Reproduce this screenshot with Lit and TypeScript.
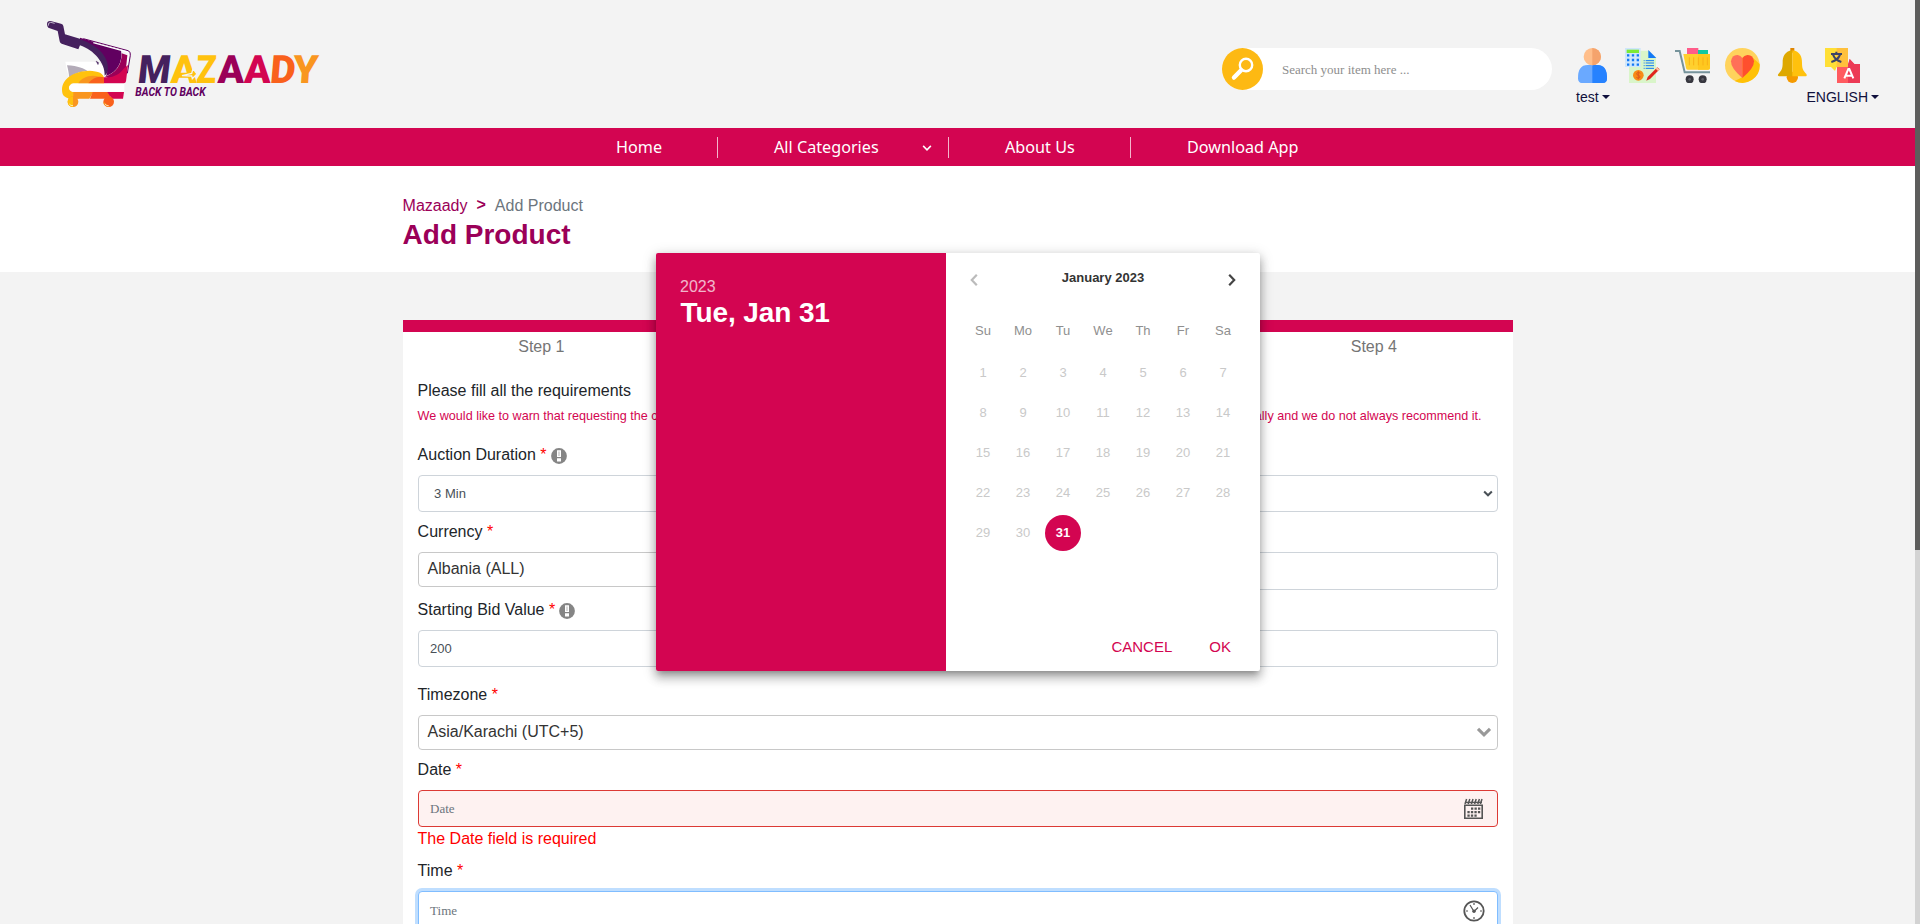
import { LitElement, html, css, svg } from "lit";
import { customElement } from "lit/decorators.js";

const letter = (ch: string, x: number, width: number, color: string, skew: number) =>
  svg`<text transform=${`translate(${x} 220) skewX(${-skew})`} fill=${color} textLength=${width} lengthAdjust="spacingAndGlyphs">${ch}</text>`;

const logo = svg`
<svg class="logo" width="310" height="110" viewBox="0 0 930 330">
  <path fill="#fff" d="M106 155H190C222 158 230 178 228 200L160 190L118 203L110 180Z"/>
  <path fill="#b3abb8" d="M111 166C145 168 162 176 174 184C150 184 132 192 118 203C116 190 115 180 111 166Z"/>
  <path fill="#45215e" d="M51 42Q51 32 62 33L93 41Q99 42 100 48L105 73L152 87C198 98 238 138 238 165C238 182 232 190 224 197C226 160 192 120 150 106L145 118L95 101Q90 100 89 94L83 63L55 53Q51 51 51 42Z"/>
  <path d="M55 47Q54 37 62 37L74 40" fill="none" stroke="#fff" stroke-width="2"/>
  <path fill="#610060" d="M150 83L273 120C279 155 262 187 228 198C248 155 215 110 150 88Z"/>
  <path fill="none" stroke="#610060" stroke-width="3" d="M160 86L294 122Q303 125 301 136L292 190"/>
  <path fill="none" stroke="#fff" stroke-width="4" d="M190 98L288 125Q297 128 295 137L289 180"/>
  <path fill="#9b0058" d="M275 130L292 136L285 203C262 208 240 206 224 201C256 190 276 166 275 130Z"/>
  <path fill="#d30551" d="M294 165L288 214Q287 220 281 220H222V202C250 205 272 190 280 177Z"/>
  <path d="M198 153L206 158L204 164Z" fill="#45215e" stroke="#45215e"/>
  <path fill="#ffc20e" d="M96 240C96 203 135 183 178 182C205 183 222 190 222 205V220H130C113 223 113 243 128 246L130 266C106 266 96 258 96 240Z"/>
  <path fill="#f9961f" d="M145 220C155 201 190 188 222 206V220Z"/>
  <path fill="#f9611c" d="M175 220C188 203 205 196 222 202V220Z"/>
  <path fill="#fff" d="M128 221H283V245H128C114 240 114 226 128 221Z"/>
  <path fill="#ffc20e" d="M108 246H146V266H115Z"/>
  <path fill="#f9961f" d="M130 246H190L178 266H130Z"/>
  <path fill="#f9611c" d="M188 246H240L240 266H180Z"/>
  <path fill="#d30551" d="M232 246H282L279 266H245Z"/>
  <circle cx="129" cy="275" r="16" fill="#f9961f"/><path fill="#ffc20e" d="M129 259A16 16 0 0 0 129 291Z"/>
  <circle cx="236" cy="275" r="16" fill="#f9611c"/><path fill="#f9961f" d="M220 275A16 16 0 0 0 240 290Z"/>
  <path d="M118 282Q122 288 129 287M225 282Q229 288 236 287" stroke="#fff" stroke-width="2" fill="none"/>
  <g font-family="Roboto" font-weight="900" font-size="117">
    ${letter("M", 320, 97, "#45215e", 7)}
    ${letter("A", 421, 80, "#ffc20e", 2)}
    ${letter("Z", 497, 60, "#ffc20e", 3)}
    ${letter("A", 562, 80, "#9b0058", 2)}
    ${letter("A", 641, 80, "#d30551", 2)}
    ${letter("D", 718, 76, "#f9611c", 5)}
    ${letter("Y", 786, 76, "#f9961f", 4)}
  </g>
  <path d="M456 197L485 190L489 176L501 192L487 206L485 198Z" fill="#ffc20e" stroke="#f3f3f3" stroke-width="4"/>
  <text x="316" y="259" fill="#610060" font-family="Roboto" font-weight="700" font-style="italic" font-size="36" textLength="211" lengthAdjust="spacingAndGlyphs">BACK TO BACK</text>
</svg>`;

/* The header icons share a 105-unit grid, three units to a pixel. */
const icon = (body: unknown) => svg`<svg width="35" height="35" viewBox="0 0 105 105">${body}</svg>`;

const userIcon = icon(svg`
  <path fill="#6aa9ff" d="M9 92Q8 51 38 51H68Q97 52 96 92Q96 104 84 105H20Q10 104 9 92Z"/>
  <path fill="#2682ff" d="M52 51H68Q97 52 96 92Q96 104 84 105H52Z"/>
  <circle cx="52" cy="26" r="26" fill="#ffbe8a"/><path fill="#f5a36c" d="M52 0A26 26 0 0 1 52 52Z"/>`);

const docIcon = icon(svg`
  <path fill="#d9f5c9" d="M12 8H70L93 30V105H12Z"/><path fill="#1379f5" d="M70 6L94 30H70Z"/>
  <rect width="47" height="57" fill="#cfe6fb"/><rect x="5" y="5" width="37" height="10" fill="#7cea35"/>
  <path stroke="#1379f5" stroke-width="7" stroke-dasharray="7 7.5" d="M6 22H42M6 36H42M6 50H42"/>
  <path stroke="#1379f5" stroke-width="3" d="M56 38H59M62 38H87M56 45H59M62 45H87M56 53H59M62 53H87M56 61H59M62 61H87"/>
  <circle cx="40" cy="82" r="16" fill="#f78b16"/>
  <path d="M46 76Q40 69 35 76Q35 82 40 82Q47 84 45 88Q40 94 34 88M40 70V94" fill="none" stroke="#e05a1b" stroke-width="3"/>
  <path d="M64 98L68 87L97 58L104 64L75 93Z" fill="#e0251d"/><path d="M92 62L96 58L104 65L99 69Z" fill="#fbc6a0"/>`);

const cartIcon = icon(svg`
  <rect x="36" width="34" height="22" fill="#ff5c8a"/><rect x="69" y="6" width="30" height="17" fill="#12c8a0"/>
  <path fill="#ffd02e" d="M25 18H105V60Q105 65 99 65H38Q34 65 33 60Z"/>
  <path fill="#ffc81f" d="M69 18H105V60Q105 65 99 65H69Z"/>
  <path stroke="#f9b016" stroke-width="3" d="M43 28V52M56 28V52M70 28V52M84 28V52M97 28V52"/>
  <path fill="none" stroke="#76939b" stroke-width="6" d="M0 9H14L29 73H105"/>
  <circle cx="44" cy="94" r="12" fill="#37373f"/><circle cx="83" cy="94" r="12" fill="#37373f"/>
  <circle cx="44" cy="94" r="4" fill="#5c5c66"/><circle cx="83" cy="94" r="4" fill="#5c5c66"/>`);

const heartIcon = icon(svg`
  <circle cx="52" cy="52" r="52" fill="#ffd35c"/>
  <path fill="#ffc107" d="M85 31L104 48A52 52 0 0 1 29 99L52 88Z"/>
  <path fill="#ff7058" d="M52 90Q17 60 18 40Q21 20 38 21Q47 22 52 30Z"/>
  <path fill="#ff4f2e" d="M52 90Q88 60 87 40Q84 20 67 21Q57 22 52 30Z"/>`);

const bellIcon = icon(svg`
  <circle cx="52" cy="88" r="17" fill="#f59a00"/><path fill="#e08600" d="M46 0H58V14H46Z"/>
  <path fill="#dea800" d="M52 7C28 10 23 28 23 44C23 62 20 67 10 78Q6 85 14 85H52Z"/>
  <path fill="#ffc10d" d="M52 7C76 10 81 28 81 44C81 62 84 67 94 78Q98 85 90 85H52Z"/>`);

const langIcon = icon(svg`
  <path fill="#ffdf36" d="M0 0H69V57H35L30 69L18 57H0Z"/><path fill="#ffc03c" d="M35 0H69V57H35Z"/>
  <path fill="#ff5a5f" d="M36 57H69L74 33L88 48H105V105H36Z"/><path fill="#ec3a55" d="M69 48L74 33L88 48H105V105H69Z"/>
  <path d="M18 18H51M34 11V18M24 20Q30 36 49 42M45 20Q40 36 19 42" fill="none" stroke="#3c4468" stroke-width="6"/>
  <path d="M58 91L70 63H73L85 91M62 83H81" fill="none" stroke="#fff" stroke-width="6"/>`);

const infoIcon = svg`<svg class="info" width="16" height="16" viewBox="0 0 16 16"><circle cx="8" cy="8" r="7.9" fill="#858585"/><path fill="#fff" d="M6 2.3H10V9H6ZM6 10.3H10V13.5H6Z"/><path fill="#b5b5b5" d="M7.5 3.4H8.5V8H7.5Z"/></svg>`;

const calendarIcon = svg`<svg width="19" height="22" viewBox="0 0 19 22">
  <path d="M.8 7.2H18.2V20.2H.8Z" fill="none" stroke="#555" stroke-width="1.6"/>
  <path d="M1 6L2.6 1M4.2 6L5.8 1M7.4 6L9 1M10.6 6L12.2 1M13.8 6L15.4 1M16.4 6L18 1" stroke="#555" stroke-width="1.5"/>
  <path d="M1 4.4H18" stroke="#555" stroke-width="1.4"/>
  <path d="M7 10.6H17M3.4 14.1H17M3.4 17.6H13.4" stroke="#555" stroke-width="2.2" stroke-dasharray="2.3 1.2"/></svg>`;

const clockIcon = svg`<svg width="22" height="22" viewBox="0 0 22 22">
  <circle cx="11" cy="11" r="9.7" fill="none" stroke="#555" stroke-width="1.8"/>
  <path d="M11 3V5M11 17V19M3 11H5M17 11H19M7 5L11 11.5L15 7.5" fill="none" stroke="#555" stroke-width="1.2"/><circle cx="11" cy="11.3" r="1.7" fill="#555"/></svg>`;

const chevron = (w: number, h: number, color: string, sw: number) =>
  svg`<svg width=${w} height=${h} viewBox="0 0 14 9"><path d="M1.6 1.6L7 7L12.4 1.6" fill="none" stroke=${color} stroke-width=${sw}/></svg>`;

@customElement("date-dialog")
export class DateDialog extends LitElement {
  static styles = css`
    :host { display: flex; width: 604px; height: 418px; background: #fff; border-radius: 2px; font-size: 13px;
      box-shadow: 0 5px 5px -3px rgba(0,0,0,.2), 0 8px 10px 1px rgba(0,0,0,.14), 0 3px 14px 2px rgba(0,0,0,.12), 0 3px 10px rgba(0,0,0,.15); }
    .side { width: 290px; box-sizing: border-box; padding: 23px 24px; background: #d30551; color: #fff; border-radius: 2px 0 0 2px; }
    .year { font-size: 16px; line-height: 22px; opacity: .7; }
    .day { font-size: 28px; font-weight: 700; line-height: 29px; letter-spacing: -.1px; padding-left: .5px; }
    .main { width: 314px; display: flex; flex-direction: column; }
    .month { display: flex; justify-content: space-between; align-items: center; height: 50px; padding: 0 24px; font-weight: 700; color: #333; }
    .month b { padding-bottom: 1px; }
    .month svg { margin-top: 4px; }
    .grid { display: grid; grid-template-columns: repeat(7, 40px); grid-auto-rows: 40px; padding: 9px 17px 0; text-align: center; line-height: 38px; color: #c9c9c9; }
    .grid .wd { color: #8f8f8f; }
    .grid .num { padding-top: 2px; }
    .sel { width: 36px; height: 36px; line-height: 36px; margin: 3px 2px 0; border-radius: 50%; background: #d30551; color: #fff; font-weight: 700; }
    .actions { display: flex; justify-content: flex-end; gap: 37px; margin-top: auto; padding: 0 29px 14px 0; font-size: 15px; line-height: 20px; color: #d30551; }
  `;
  render() {
    return html`
      <div class="side"><div class="year">2023</div><div class="day">Tue, Jan 31</div></div>
      <div class="main">
        <div class="month">
          <svg width="8" height="12" viewBox="0 0 8 12"><path d="M6.8 .8L1.8 6L6.8 11.2" fill="none" stroke="#bbb" stroke-width="2.2"/></svg>
          <b>January 2023</b>
          <svg width="8" height="12" viewBox="0 0 8 12"><path d="M1.2 .8L6.2 6L1.2 11.2" fill="none" stroke="#444" stroke-width="2.2"/></svg>
        </div>
        <div class="grid">
          ${["Su", "Mo", "Tu", "We", "Th", "Fr", "Sa"].map((d) => html`<div class="wd">${d}</div>`)}
          ${Array.from({ length: 30 }, (_, i) => html`<div class="num">${i + 1}</div>`)}
          <div class="sel">31</div>
        </div>
        <div class="actions"><span>CANCEL</span><span>OK</span></div>
      </div>`;
  }
}

@customElement("app-root")
export class AppRoot extends LitElement {
  static styles = css`
    :host { display: flex; position: relative; width: 100%; height: 924px; overflow: hidden; background: #f3f3f3;
      font-family: "Liberation Sans", Arial, sans-serif; font-size: 16px; line-height: 24px; color: #212529; }
    * { box-sizing: border-box; }
    svg { display: block; flex: none; }
    .page { flex: 1; min-width: 0; }
    .scroll { width: 5px; background: #d3d3d3; }
    .thumb { height: 550px; background: #5d5d5c; }
    header { display: flex; height: 128px; padding: 10px 0 0 30px; }
    .search { display: flex; align-items: center; width: 330px; height: 42px; margin: 38px 23px 0 auto; background: #fff; border-radius: 21px;
      font: 13px "Liberation Serif", serif; color: #8e8e8e; gap: 19px; }
    .search span { padding-top: 2px; }
    .account { width: 340px; padding-top: 38px; }
    .icons { display: flex; gap: 15px; }
    .names { display: flex; justify-content: space-between; padding: 4px 36px 0 1px; font-size: 14px; line-height: 21px; color: #10103c; }
    .names span { display: flex; align-items: center; gap: 3px; }
    .caret { border: 4px solid transparent; border-top-color: #10103c; border-bottom: 0; margin-bottom: 2px; }
    nav { display: flex; justify-content: center; align-items: center; height: 38px; background: #d30551; color: #fff; font: 16.2px/21px "Noto Sans", sans-serif; }
    nav div { height: 21px; padding-left: 56px; border-right: 1px solid #f3b6cc; white-space: nowrap; }
    .n1 { width: 158px; } .n2 { width: 231px; display: flex; justify-content: space-between; padding-right: 16px; }
    .n2 svg { margin-top: 7px; }
    .n3 { width: 182px; } nav .n4 { width: 224px; border: 0; }
    .title { height: 106px; background: #fff; padding: 28px 0 0 402.6px; color: #9b0058; }
    .crumbs { display: flex; gap: 9px; }
    .crumbs b { line-height: 22px; } .crumbs i { font-style: normal; color: #6c757d; }
    h1 { margin: 0; font-size: 28px; line-height: 34px; }
    .card { width: 1110px; height: 604px; margin: 48px auto 0 402.6px; background: #fff; }
    .bar { height: 12px; background: #d30551; }
    .steps { display: grid; grid-template-columns: repeat(4, 1fr); text-align: center; height: 47px; padding-top: 3px; color: #757575; }
    .form { padding: 0 15px; }
    .warn { display: flex; justify-content: space-between; font-size: 12.6px; line-height: 24px; height: 39px; margin-top: 1px; color: #d30551; padding-right: 16px; white-space: nowrap; }
    .rows { display: grid; grid-template-rows: 77px 78px 85px 75px 101px 70px; }
    .two { display: grid; grid-template-columns: 1fr 1fr; column-gap: 30px; }
    .label { display: flex; height: 24px; margin-bottom: 8px; white-space: pre; }
    .label em { font-style: normal; color: #f00; }
    .info { margin: 5px 0 0 4px; }
    .field { display: flex; align-items: center; justify-content: space-between; height: 37px; border: 1px solid #ced4da; border-radius: 4px; padding: 0 11.5px; font-size: 13px; color: #495057; background: #fff; }
    .tall { height: 38px; }
    .select { padding: 0 4px 0 15.5px; }
    .pick { height: 35px; border-color: #c8c8c8; font-size: 16px; color: #333; padding: 0 5px 2px 9px; }
    .serif { font-family: "Liberation Serif", serif; color: #6c757d; }
    .error { border-color: #dc3a35; background: #fef2f1; padding-right: 14px; }
    .focus { border-color: #80bdff; box-shadow: 0 0 0 3px #bfdeff; padding: 2px 12px 0 11.5px; }
    .msg { color: #f00; }
    date-dialog { position: absolute; left: 656px; top: 253px; }
  `;

  private label(text: string, info = false) {
    return html`<div class="label">${text} <em>*</em>${info ? infoIcon : ""}</div>`;
  }

  render() {
    return html`
      <div class="page">
        <header>
          ${logo}
          <div class="search">
            <svg width="41" height="42" viewBox="0 0 41 42"><ellipse cx="20.5" cy="21" rx="20.5" ry="20.9" fill="#fdb913"/><circle cx="24" cy="17" r="6.2" fill="none" stroke="#fff" stroke-width="2.4"/><path d="M12 29.6L19.1 22.2" stroke="#fff" stroke-width="4.4" stroke-linecap="round"/></svg>
            <span>Search your item here ...</span>
          </div>
          <div class="account">
            <div class="icons">${userIcon}${docIcon}${cartIcon}${heartIcon}${bellIcon}${langIcon}</div>
            <div class="names"><span>test<i class="caret"></i></span><span>ENGLISH<i class="caret"></i></span></div>
          </div>
        </header>
        <nav><div class="n1">Home</div><div class="n2">All Categories${chevron(10, 8, "#fff", 2.2)}</div><div class="n3">About Us</div><div class="n4">Download App</div></nav>
        <section class="title">
          <div class="crumbs"><span>Mazaady</span><b>&gt;</b><i>Add Product</i></div>
          <h1>Add Product</h1>
        </section>
        <main class="card">
          <div class="bar"></div>
          <div class="steps"><span>Step 1</span><span>Step 2</span><span>Step 3</span><span>Step 4</span></div>
          <div class="form">
            <div>Please fill all the requirements</div>
            <div class="warn"><span>We would like to warn that requesting the customer</span><span>manually and we do not always recommend it.</span></div>
            <div class="rows">
              <div>${this.label("Auction Duration", true)}<div class="field select">3 Min${chevron(10, 7, "#495057", 2.8)}</div></div>
              <div class="two">
                <div>${this.label("Currency")}<div class="field pick">Albania (ALL)</div></div>
                <div><div class="label"></div><div class="field tall"></div></div>
              </div>
              <div>${this.label("Starting Bid Value", true)}<div class="field">200</div></div>
              <div>${this.label("Timezone")}<div class="field pick">Asia/Karachi (UTC+5)${chevron(16, 10, "#999", 2.8)}</div></div>
              <div>${this.label("Date")}<div class="field serif error">Date${calendarIcon}</div><div class="msg">The Date field is required</div></div>
              <div>${this.label("Time")}<div class="field serif focus">Time${clockIcon}</div></div>
            </div>
          </div>
        </main>
      </div>
      <div class="scroll"><div class="thumb"></div></div>
      <date-dialog></date-dialog>`;
  }
}
